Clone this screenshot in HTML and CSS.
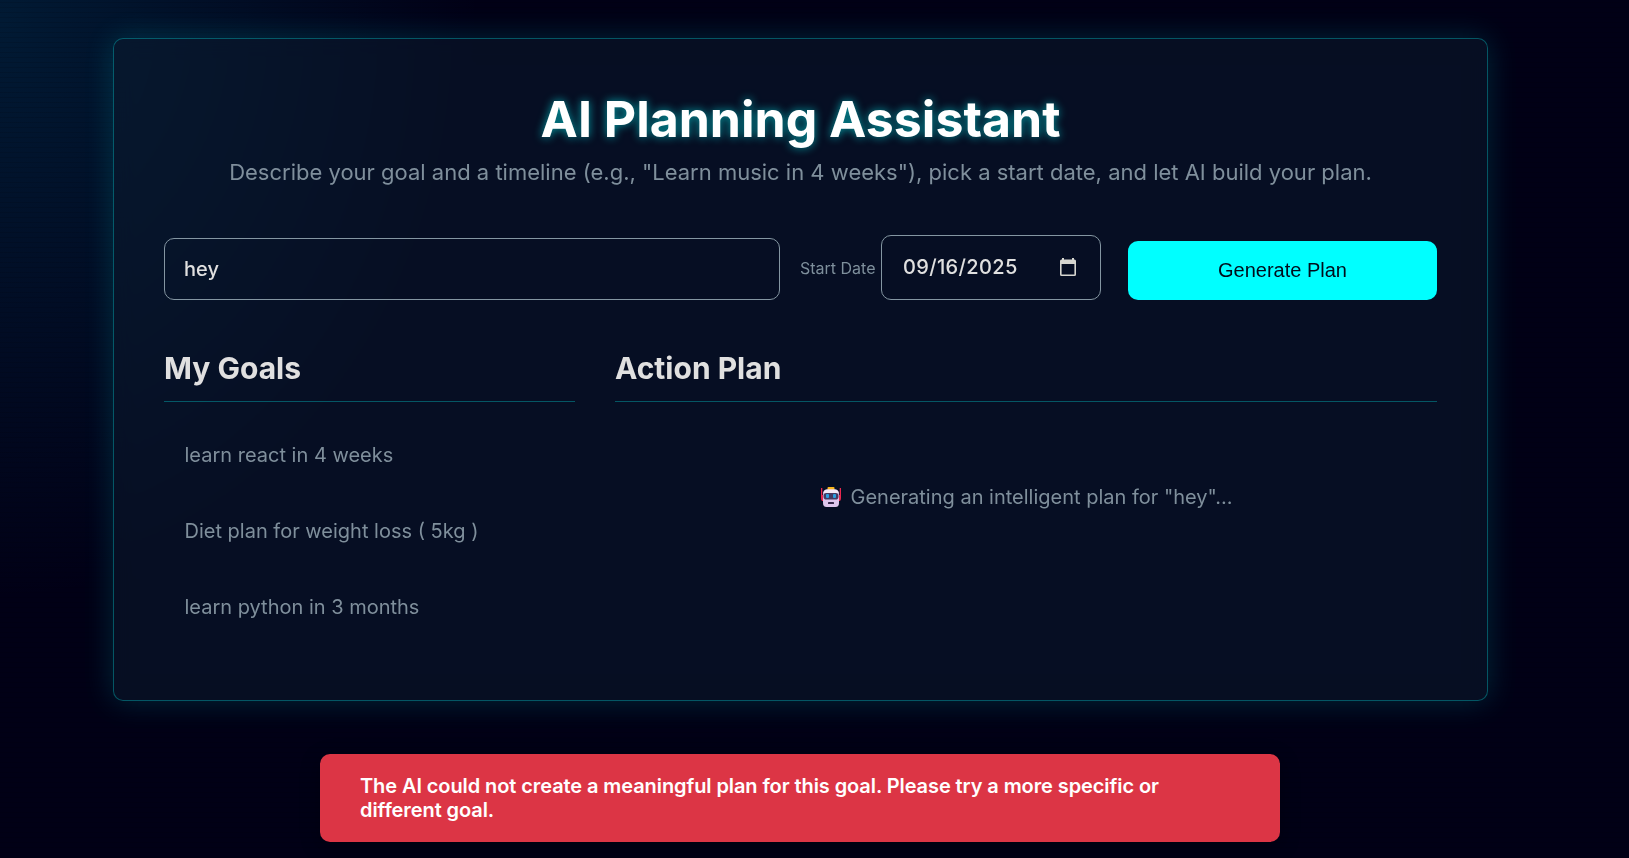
FILE: index.html
```html
<!DOCTYPE html>
<html lang="en">
<head>
<meta charset="utf-8">
<title>AI Planning Assistant</title>
<link rel="stylesheet" href="styles.css">
</head>
<body>
<main class="panel">
  <header class="intro">
    <h1 class="title">AI Planning Assistant</h1>
    <p class="subtitle">Describe your goal and a timeline (e.g., "Learn music in 4 weeks"), pick a start date, and let AI build your plan.</p>
  </header>
  <form class="form">
    <div class="goal-input">hey</div>
    <span class="date-label">Start Date</span>
    <div class="date-input"><span class="date-value">09/16/2025</span>
      <svg class="calendar" viewBox="0 0 16 18" width="16" height="18"><path fill="#d6d6d0" fill-rule="evenodd" d="M2 0H4V1.5H12V0H14V1.5H14.5Q16 1.5 16 3V16.5Q16 18 14.5 18H1.500Q0 18 0 16.500V3Q0 1.500 1.500 1.500H2ZM1.600 6V16.400H14.400V6Z"/></svg>
    </div>
    <button class="generate" type="button">Generate Plan</button>
  </form>
  <div class="columns">
    <section>
      <h2 class="heading">My Goals</h2>
      <ul class="goals">
        <li>learn react in 4 weeks</li>
        <li>Diet plan for weight loss ( 5kg )</li>
        <li>learn python in 3 months</li>
      </ul>
    </section>
    <section>
      <h2 class="heading">Action Plan</h2>
      <p class="status">
        <svg class="robot" viewBox="0 0 20 20" width="20" height="20">
          <path fill="#e8274f" d="M0 1h1.300v7h1.200v6H1Q0 13 0 11zM20 1h-1.300v7h-1.200v6H19Q20 13 20 11z"/>
          <rect x="6.500" y="0" width="7" height="4" rx="1" fill="#f9b51c"/>
          <path fill="#dfc6ec" d="M6 2.500H14Q18 2.500 18 7V16Q18 20 14.500 20H5.500Q2 20 2 16V7Q2 2.500 6 2.500Z"/>
          <path fill="#f4e9f7" d="M6 2.500H14Q17 2.500 17.500 6H2.500Q3 2.500 6 2.500Z"/>
          <rect x="2.500" y="6" width="15" height="6.500" rx="2.800" fill="#453b62"/>
          <rect x="5" y="7" width="3" height="4" rx="1" fill="#2c9fe0"/>
          <rect x="12" y="7" width="3" height="4" rx="1" fill="#2c9fe0"/>
          <rect x="7" y="15" width="6" height="2" rx="0.500" fill="#37284a"/>
        </svg>
        <span>Generating an intelligent plan for "hey"...</span>
      </p>
    </section>
  </div>
</main>
<div class="toast">The AI could not create a meaningful plan for this goal. Please try a more specific or different goal.</div>
</body>
</html>
```
FILE: styles.css
```css
* { box-sizing: border-box; margin: 0; padding: 0; }
body {
  height: 858px;
  overflow: hidden;
  padding: 38px 28px 0 0;
  font: 20px/24px Inter, sans-serif;
  color: #e0e0e0;
  background:
    repeating-linear-gradient(0deg, rgba(0, 0, 0, 0.12) 0 1px, transparent 1px 5px),
    radial-gradient(ellipse 480px 580px at 0 20px, rgba(0, 145, 190, 0.18), transparent),
    #010016;
}
.panel {
  width: 1375px;
  height: 663px;
  margin: 0 auto;
  padding: 50px;
  border: 1px solid rgba(0, 255, 255, 0.3);
  border-radius: 10px;
  background: rgba(11, 27, 47, 0.5);
  backdrop-filter: blur(10px);
  box-shadow: 0 0 30px rgba(0, 255, 255, 0.16);
}
.intro { text-align: center; }
.title {
  font-size: 50px;
  line-height: 60px;
  font-weight: 700;
  color: #fff;
  text-shadow: 0 0 10px rgba(0, 255, 255, 0.6);
}
.subtitle { margin-top: 10px; font-size: 22px; line-height: 27px; color: #7f8f9c; }
.form { display: flex; align-items: flex-end; height: 65px; margin-top: 49px; }
.goal-input {
  width: 616px;
  height: 62px;
  padding: 18px 19px;
  border: 1px solid #8496a2;
  border-radius: 10px;
  font-weight: 500;
}
.date-label { width: 81px; margin: 0 0 20px 20px; font-size: 16px; color: #7e8f9c; }
.date-input {
  display: flex;
  justify-content: space-between;
  align-items: flex-start;
  width: 220px;
  height: 65px;
  padding: 19px 24px 0 21px;
  border: 1px solid #8496a2;
  border-radius: 10px;
  font-weight: 500;
}
.date-value { letter-spacing: 0.35px; }
.calendar { margin-top: 3px; }
.generate {
  width: 309px;
  height: 59px;
  margin-left: 27px;
  border: 0;
  border-radius: 10px;
  background: #0ff;
  color: #020c1b;
  font: 20px "Liberation Sans", Arial, sans-serif;
}
.columns { display: grid; grid-template-columns: 411px 822px; gap: 40px; margin-top: 50px; }
.heading {
  height: 52px;
  border-bottom: 1px solid rgba(0, 255, 255, 0.3);
  font-size: 30px;
  line-height: 37px;
  font-weight: 700;
}
.goals { list-style: none; padding: 41px 0 0 20.5px; color: #7f8f9c; }
.goals li { height: 76px; }
.status { display: flex; justify-content: center; gap: 9px; padding: 83px 0 0 2px; color: #7f8f9c; }
.robot { margin-top: 2px; }
.toast {
  width: 960px;
  height: 88px;
  margin: 53px 0 0 320px;
  padding: 20px 100px 20px 40px;
  border-radius: 10px;
  background: #dc3545;
  color: #fff;
  font-weight: 600;
  letter-spacing: -0.09px;
  box-shadow: 0 5px 20px rgba(0, 0, 0, 0.3);
}
```
